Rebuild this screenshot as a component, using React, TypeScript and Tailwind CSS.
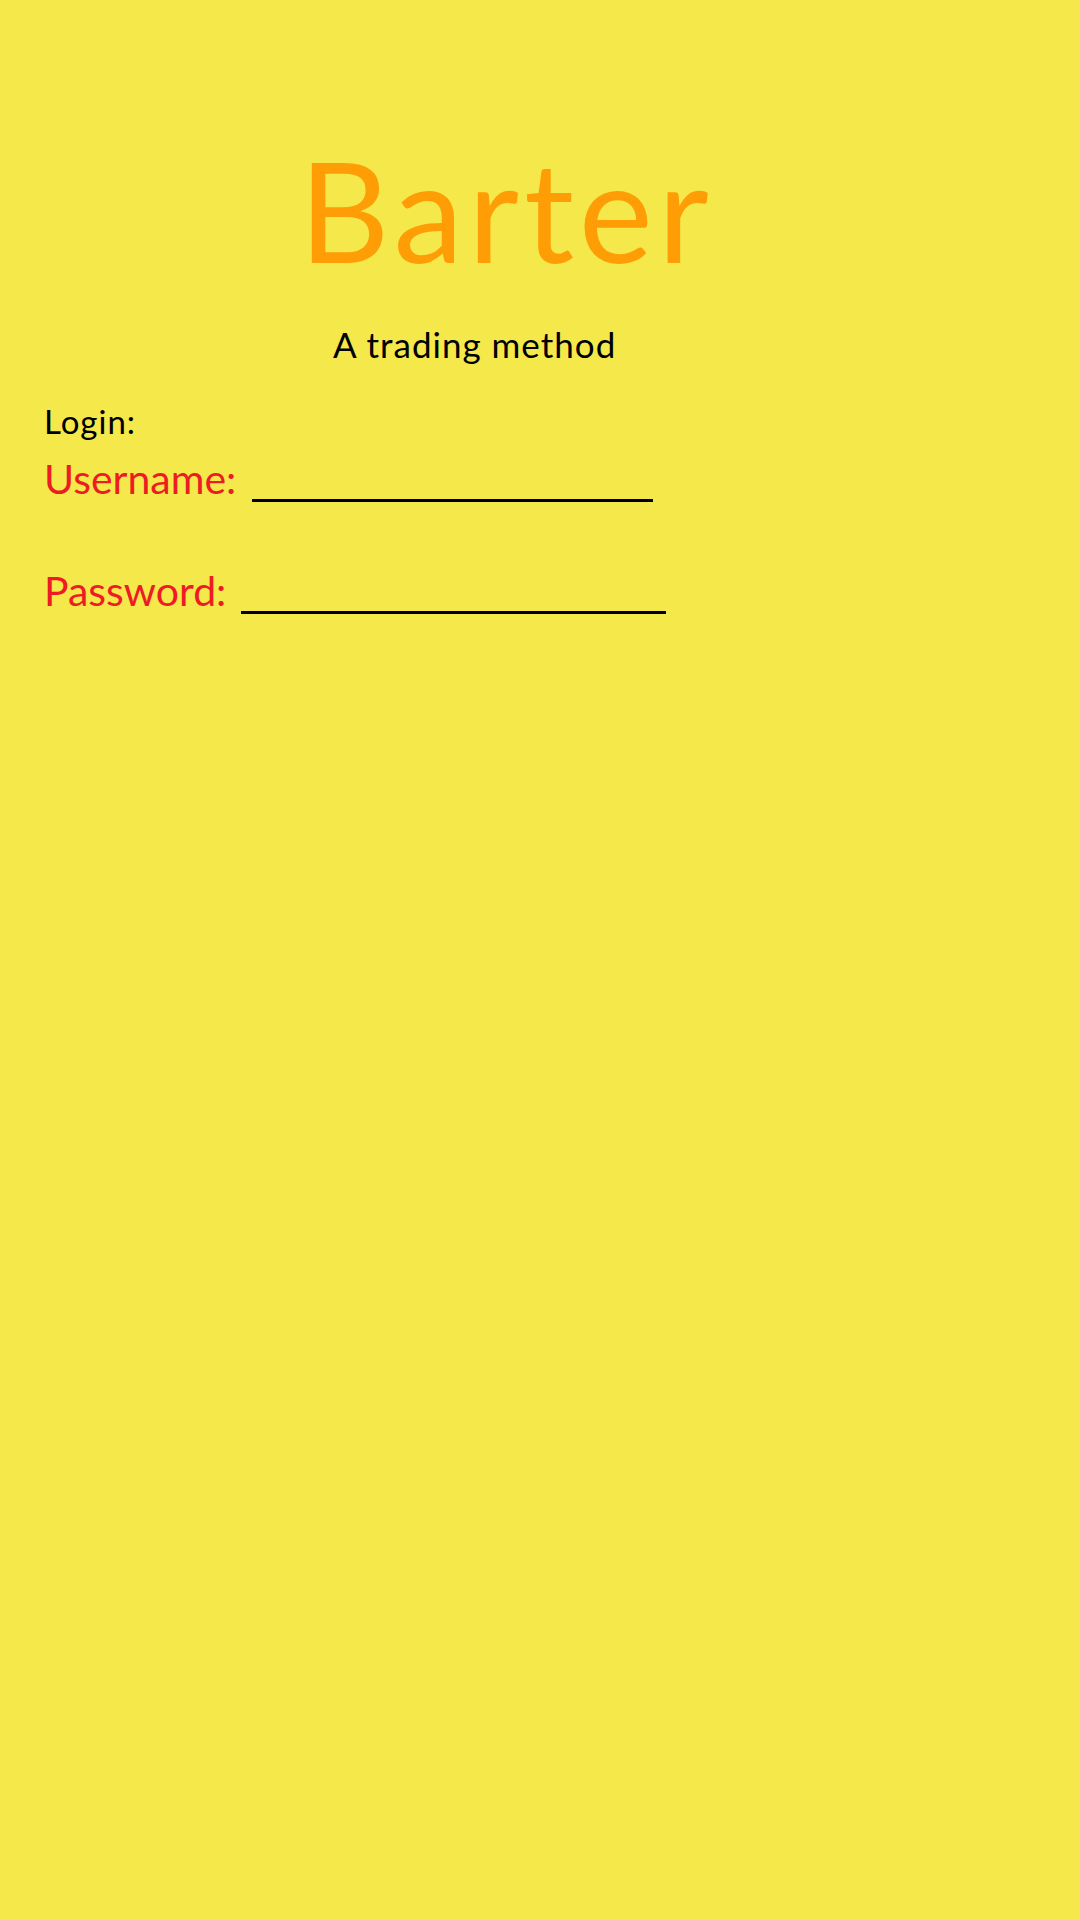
export default function App() {
    return (
        <div className="w-[1080px] h-[1920px] bg-[#f4e84a] overflow-hidden" style={{ fontFamily: 'Lato, sans-serif' }}>
            {/* Title */}
            <h1 className="pt-[139px] pl-[299px] text-[140px] leading-none tracking-[5px] text-[#ff9d06] font-normal">Barter</h1>
            <p className="mt-[48px] pl-[333px] text-[35px] leading-none tracking-[1px] text-black">A trading method</p>

            {/* Login form */}
            <div className="mt-[43px] pl-[44px]">
                <p className="text-[33px] leading-none tracking-[1px] text-black">Login:</p>

                <div className="mt-[20px] flex items-end text-[41px] leading-none text-[#ed1c24]">
                    <span>Username:</span>
                    <span className="ml-[16px] mb-[-3px] w-[401px] border-b-[3px] border-black"></span>
                </div>

                <div className="mt-[71px] flex items-end text-[41px] leading-none text-[#ed1c24]">
                    <span>Password:</span>
                    <span className="ml-[15px] mb-[-3px] w-[425px] border-b-[3px] border-black"></span>
                </div>
            </div>
        </div>
    )
}
